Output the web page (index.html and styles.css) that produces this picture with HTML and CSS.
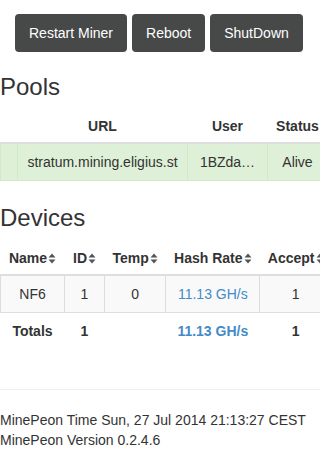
FILE: index.html
```html
<!DOCTYPE html>
<html lang="en">
  <head>
    <meta charset="UTF-8" />
    <title>MinePeon</title>
    <link rel="stylesheet" href="styles.css">
  </head>
  <body>
    <div class="actions">
      <button class="btn">Restart Miner</button>
      <button class="btn">Reboot</button>
      <button class="btn">ShutDown</button>
    </div>

    <h3>Pools</h3>
    <div class="table-wrap">
      <table class="table pools">
        <colgroup>
          <col style="width: 17px" />
          <col style="width: 170px" />
          <col style="width: 80px" />
          <col style="width: 60px" />
        </colgroup>
        <thead>
          <tr>
            <th></th>
            <th>URL</th>
            <th>User</th>
            <th>Status</th>
          </tr>
        </thead>
        <tbody>
          <tr class="success">
            <td></td>
            <td>stratum.mining.eligius.st</td>
            <td>1BZda…</td>
            <td>Alive</td>
          </tr>
        </tbody>
      </table>
    </div>

    <h3 class="devices-title">Devices</h3>
    <div class="table-wrap devices-wrap">
      <table class="table devices">
        <colgroup>
          <col style="width: 64px" />
          <col style="width: 40px" />
          <col style="width: 60px" />
          <col style="width: 94px" />
          <col style="width: 70px" />
        </colgroup>
        <thead>
          <tr>
            <th>Name<span class="sort"></span></th>
            <th>ID<span class="sort"></span></th>
            <th>Temp<span class="sort"></span></th>
            <th>Hash Rate<span class="sort"></span></th>
            <th>Accept<span class="sort"></span></th>
          </tr>
        </thead>
        <tbody>
          <tr class="striped">
            <td>NF6</td>
            <td>1</td>
            <td>0</td>
            <td><a href="#">11.13 GH/s</a></td>
            <td>1</td>
          </tr>
        </tbody>
        <tfoot>
          <tr>
            <th>Totals</th>
            <th>1</th>
            <th></th>
            <th><a href="#">11.13 GH/s</a></th>
            <th>1</th>
          </tr>
        </tfoot>
      </table>
    </div>

    <hr />

    <footer>
      MinePeon Time Sun, 27 Jul 2014 21:13:27 CEST<br />
      MinePeon Version 0.2.4.6
    </footer>

    <script>
      // sort arrows for the device headers
      document.querySelectorAll(".sort").forEach((el) => {
        el.innerHTML =
          '<svg width="8" height="11" viewBox="0 0 8 11">' +
          '<path d="M4 0.5 L7.5 4.5 L0.5 4.5 Z" fill="#555"/>' +
          '<path d="M4 10.5 L7.5 6.5 L0.5 6.5 Z" fill="#555"/>' +
          "</svg>";
      });
    </script>
  </body>
</html>
```

FILE: styles.css
```css
body {
  margin: 0;
  font-family: "Liberation Sans", Arial, sans-serif;
  font-size: 14px;
  line-height: 20px;
  color: #333;
  background: #fff;
  overflow: hidden;
}
.actions {
  display: flex;
  gap: 5px;
  padding: 14px 0 0 15px;
}
.btn {
  height: 38px;
  padding: 0 14px;
  border: none;
  border-radius: 4px;
  background: #474949;
  color: #fff;
  font-family: inherit;
  font-size: 14px;
}
h3 {
  margin: 22px 0 10px;
  font-size: 24px;
  font-weight: normal;
  line-height: 1.1;
}
.devices-title {
  margin-top: 24px;
}
.table-wrap {
  overflow: hidden;
  margin-bottom: 22px;
}
.devices-wrap {
  margin-bottom: 40px;
}
.table {
  table-layout: fixed;
  border-collapse: collapse;
  border-spacing: 0;
  width: max-content;
}
.table th,
.table td {
  padding: 8px;
  text-align: center;
  white-space: nowrap;
  overflow: hidden;
}
.table thead th {
  padding: 6px 8px;
  border-bottom: 2px solid #ddd;
  font-weight: bold;
}
.table tbody td {
  border: 1px solid #ddd;
  border-top: none;
}
.table tbody tr.success td {
  background: #dff0d8;
  border-color: #d0e9c6;
}
.table tbody tr.striped td {
  background: #f9f9f9;
}
.table tfoot th {
  font-weight: bold;
}
.sort {
  display: inline-block;
  margin-left: 1px;
  vertical-align: -1px;
}
.sort svg {
  display: block;
}
a {
  color: #428bca;
  text-decoration: none;
}
hr {
  margin: 0 0 20px;
  border: 0;
  border-top: 1px solid #eee;
}
footer {
  padding: 0;
}
```
